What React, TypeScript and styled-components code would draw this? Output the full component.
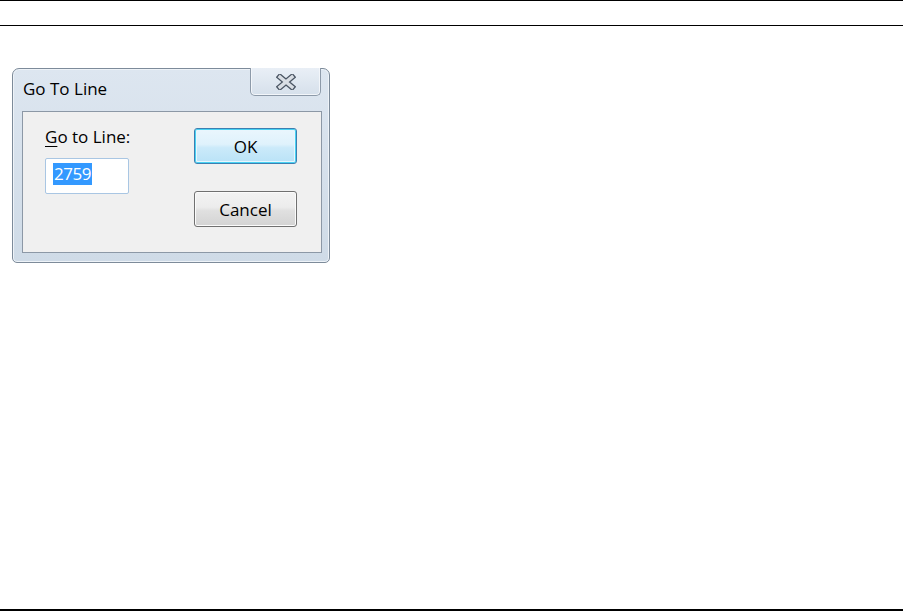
import React from "react";
import styled, { createGlobalStyle } from "styled-components";

const Global = createGlobalStyle`
  html, body { margin: 0; padding: 0; background: #ffffff; }
  body { font-family: "Open Sans", "Noto Sans", sans-serif; }
`;

const Page = styled.div`
  width: 903px;
  height: 611px;
  display: flex;
  flex-direction: column;
  box-sizing: border-box;
  border-bottom: 2px solid #000;
`;

const TopBand = styled.div`
  height: 24px;
  border-top: 1px solid #000;
  border-bottom: 1px solid #000;
  flex: none;
`;

const Stage = styled.div`
  flex: 1;
  padding: 42px 0 0 12px;
`;

const Window = styled.div`
  width: 318px;
  height: 195px;
  box-sizing: border-box;
  border: 1px solid #7d8b9a;
  border-radius: 7px 7px 5px 5px;
  background: linear-gradient(#dde6f0, #cfdbe7);
  display: flex;
  flex-direction: column;
  box-shadow: inset 0 0 0 1px #eef3f8;
`;

const TitleBar = styled.div`
  height: 42px;
  display: flex;
  align-items: flex-start;
  justify-content: space-between;
  padding: 0 8px 0 10px;
  flex: none;
`;

const Title = styled.div`
  font-size: 17px;
  line-height: normal;
  color: #000;
  margin-top: 8px;
`;

const CloseBtn = styled.div`
  width: 71px;
  height: 28px;
  margin-top: -1px;
  box-sizing: border-box;
  border: 1px solid #8d9aa9;
  border-top: none;
  border-radius: 0 0 5px 5px;
  background: linear-gradient(#e9eff6, #d6e0eb);
  box-shadow: inset 0 -1px 0 #f3f6fa, inset 1px 0 0 #f3f6fa, inset -1px 0 0 #f3f6fa;
  display: flex;
  align-items: center;
  justify-content: center;
`;

const Panel = styled.div`
  flex: 1;
  margin: 0 7px 9px 9px;
  border: 1px solid #8c98a6;
  background: #f0f0f0;
  display: flex;
  justify-content: space-between;
  padding: 16px 24px 0 22px;
`;

const LeftCol = styled.div`
  display: flex;
  flex-direction: column;
`;

const Label = styled.div`
  font-size: 17px;
  color: #000;
  line-height: 18px;
  u { text-decoration: underline; text-underline-offset: 3px; }
`;

const Field = styled.div`
  margin-top: 12px;
  width: 84px;
  height: 36px;
  box-sizing: border-box;
  border: 1px solid #a9c6e3;
  border-radius: 2px;
  background: #fff;
  padding: 4px 0 0 7px;
`;

const Selected = styled.span`
  display: inline-block;
  background: #3399ff;
  color: #fff;
  font-size: 17px;
  letter-spacing: -0.5px;
  line-height: 22px;
  padding: 0 1px;
`;

const RightCol = styled.div`
  display: flex;
  flex-direction: column;
  gap: 27px;
`;

const Button = styled.div<{ $primary?: boolean }>`
  width: 103px;
  height: 36px;
  box-sizing: border-box;
  border-radius: 3px;
  border: 1px solid ${(p) => (p.$primary ? "#3c7fb1" : "#707070")};
  background: ${(p) =>
    p.$primary
      ? "linear-gradient(#eaf6fd 0%, #dff2fc 45%, #cbeafa 55%, #b9e2f7 100%)"
      : "linear-gradient(#f3f3f3 0%, #ececec 45%, #e0e0e0 55%, #d3d3d3 100%)"};
  box-shadow: ${(p) =>
    p.$primary ? "inset 0 0 0 1px #48d2f3, inset 0 0 0 2px #e8f6fd" : "inset 0 0 0 1px #fbfbfb"};
  display: flex;
  align-items: center;
  justify-content: center;
  font-size: 17px;
  color: #000;
`;

const CloseIcon = () => (
  <svg width="20" height="16" viewBox="0 0 20 16">
    <path
      d="M4 3 L16 13 M16 3 L4 13"
      stroke="#4a5563"
      strokeWidth="6"
      strokeLinecap="square"
    />
    <path
      d="M4 3 L16 13 M16 3 L4 13"
      stroke="#d9dee4"
      strokeWidth="3.4"
      strokeLinecap="square"
    />
  </svg>
);

export default function App() {
  return (
    <>
      <Global />
      <Page>
        <TopBand />
        <Stage>
          <Window>
            <TitleBar>
              <Title>Go To Line</Title>
              <CloseBtn>
                <CloseIcon />
              </CloseBtn>
            </TitleBar>
            <Panel>
              <LeftCol>
                <Label>
                  <u>G</u>o to Line:
                </Label>
                <Field>
                  <Selected>2759</Selected>
                </Field>
              </LeftCol>
              <RightCol>
                <Button $primary>OK</Button>
                <Button>Cancel</Button>
              </RightCol>
            </Panel>
          </Window>
        </Stage>
      </Page>
    </>
  );
}
